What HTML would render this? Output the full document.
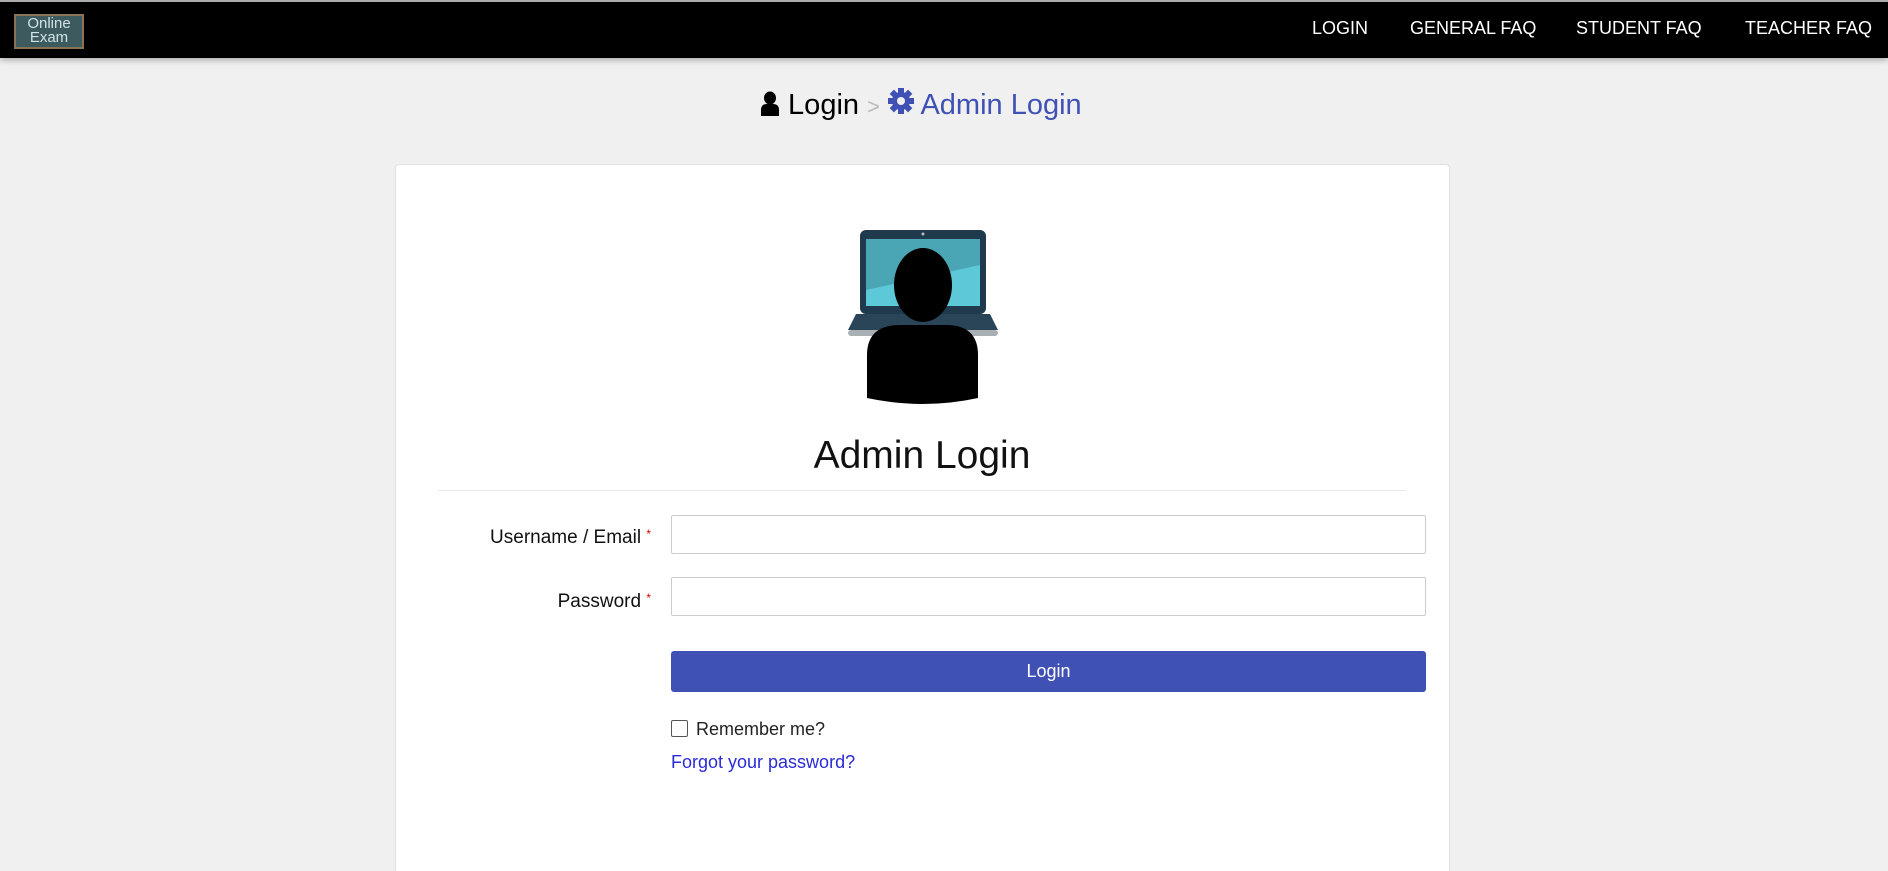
<!DOCTYPE html>
<html style="width:1888px;height:871px;overflow:hidden"><head><meta charset="utf-8"><style>
*{box-sizing:border-box;margin:0;padding:0}
body{width:1888px;height:871px;overflow:hidden;background:#f0f0f0;font-family:"Liberation Sans",sans-serif;position:relative}
.nav{position:absolute;left:0;top:0;width:1888px;height:58px;background:#000;border-top:2px solid #aaa;box-shadow:0 2px 6px rgba(0,0,0,.3)}
.logo{position:absolute;left:14px;top:12px;width:70px;height:35px;background:#3d5a5f;border:2px solid #8a7355;color:#cfe3e6;font-size:15px;line-height:14px;text-align:center;padding-top:1px}
.nav a{position:absolute;top:16px;color:#fff;font-size:18px;text-decoration:none}
.bc{position:absolute;top:88px;left:760px;font-size:29px;white-space:nowrap;color:#000}
.card{position:absolute;left:395px;top:164px;width:1055px;height:710px;background:#fff;border:1px solid #e2e2e2;border-radius:4px}
.t{position:absolute;left:0;width:1844px;text-align:center;top:434px;font-size:39px;color:#111}
.hr{position:absolute;left:438px;width:968px;top:490px;border-top:1px solid #e8e8e8}
.lbl{position:absolute;font-size:19px;color:#111;text-align:right;width:300px}
.lbl i{color:#d00;font-style:normal;font-size:12px;vertical-align:top}
.in{position:absolute;left:671px;width:755px;height:39px;border:1px solid #ccc;border-radius:2px}
.btn{position:absolute;left:671px;top:651px;width:755px;height:41px;background:#3f51b5;border-radius:3px;color:#fff;font-size:18px;text-align:center;line-height:41px}
</style></head><body>
<div class="nav">
<div class="logo">Online<br>Exam</div>
<a style="left:1312px">LOGIN</a><a style="left:1410px">GENERAL FAQ</a><a style="left:1576px">STUDENT FAQ</a><a style="left:1745px">TEACHER FAQ</a>
</div>
<div class="bc"><svg width="20" height="26" viewBox="0 0 20 26" style="vertical-align:-3px"><ellipse cx="10" cy="7" rx="6" ry="6.5"/><path d="M1 25 V19 Q1 13 7 13 H13 Q19 13 19 19 V25 Z"/></svg> Login <span style="color:#bbb;font-size:22px">&gt;</span> <span style="color:#3f51b5"><svg width="26" height="26" viewBox="0 0 26 26" style="vertical-align:0"><g fill="#3f51b5"><circle cx="13" cy="13" r="9"/><rect x="10" y="0" width="6" height="26"/><rect x="0" y="10" width="26" height="6"/><rect x="10" y="0" width="6" height="26" transform="rotate(45 13 13)"/><rect x="10" y="0" width="6" height="26" transform="rotate(-45 13 13)"/></g><circle cx="13" cy="13" r="4" fill="#f0f0f0"/></svg> Admin Login</span></div>
<div class="card"></div>
<svg style="position:absolute;left:830px;top:220px" width="180" height="190" viewBox="0 0 180 190">
<rect x="30" y="10" width="126" height="84" rx="6" fill="#1f3a4c"/>
<rect x="36" y="19" width="114" height="67" fill="#4aa6b5"/>
<path d="M36 86 L36 70 L150 45 L150 86 Z" fill="#5cc8d8"/>
<circle cx="93" cy="14" r="1.5" fill="#bbb"/>
<path d="M26 94 H160 L168 110 H18 Z" fill="#2a4558"/>
<rect x="18" y="110" width="150" height="6" rx="3" fill="#a9b0b5"/>
<ellipse cx="93" cy="65" rx="29" ry="37" fill="#000"/>
<path d="M37 178 V135 Q37 105 70 105 H116 Q148 105 148 135 V178 Q93 190 37 178 Z" fill="#000"/>
</svg>
<div class="t">Admin Login</div>
<div class="hr"></div>
<div class="lbl" style="left:351px;top:527px">Username / Email <i>*</i></div>
<div class="lbl" style="left:351px;top:591px">Password <i>*</i></div>
<div class="in" style="top:515px"></div>
<div class="in" style="top:577px"></div>
<div class="btn">Login</div>
<div style="position:absolute;left:671px;top:720px;width:17px;height:17px;border:1px solid #555;border-radius:2px"></div>
<div style="position:absolute;left:696px;top:719px;font-size:18px;color:#222">Remember me?</div>
<div style="position:absolute;left:671px;top:752px;font-size:18px;color:#2a2ad8">Forgot your password?</div>
</body></html>
